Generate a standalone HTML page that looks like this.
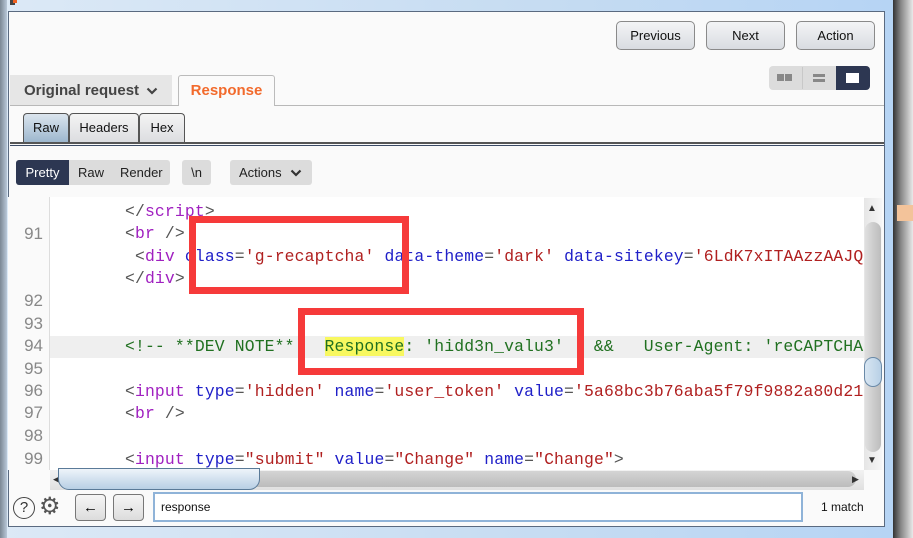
<!DOCTYPE html>
<html><head><meta charset="utf-8"><style>
*{margin:0;padding:0;box-sizing:border-box}
body{width:913px;height:538px;overflow:hidden;background:#6f7479;position:relative;font-family:"Liberation Sans",Arial,sans-serif}
.abs{position:absolute}
.btn{position:absolute;top:21px;height:29px;border:1px solid #8a8a8a;border-radius:5px;background:linear-gradient(#f3f4f6,#d9dce1);font-size:13px;color:#111;text-align:center;line-height:27px}
.code{position:absolute;left:50px;top:197px;width:814px;height:273px;background:#fff;overflow:hidden;font-family:"Liberation Mono",monospace;font-size:16.4px;letter-spacing:0.14px;white-space:pre}
.ln{position:absolute;left:0;width:43px;text-align:right;font-family:"Liberation Sans",sans-serif;font-size:17px;color:#888}
.l{position:absolute;left:75px;height:22px;line-height:22px}
.t{color:#555}.k{color:#a020c0}.a{color:#2020c8}.v{color:#b02020}.c{color:#207020}
</style></head><body>
<div class="abs" style="left:0;top:0;width:895px;height:538px;background:linear-gradient(90deg,#dce9f6,#c6dcf2 60%,#b6d4f4);"></div>
<div class="abs" style="left:893px;top:0;width:20px;height:538px;background:linear-gradient(90deg,#333,#888 40%,#e9e9e9)"></div>
<div class="abs" style="left:897px;top:205px;width:16px;height:16px;background:#f3c39a"></div>
<div class="abs" style="left:0;top:0;width:7px;height:538px;background:linear-gradient(90deg,#7b8794,#b9c8d8)"></div>
<div class="abs" style="left:10px;top:0;width:5px;height:5px;background:#444"></div>
<div class="abs" style="left:13px;top:0;width:4px;height:3px;background:#f06020"></div>
<div class="abs" style="left:8px;top:11px;width:877px;height:516px;background:#fafafa;border:1px solid #5a6a80;"></div>
<div class="btn" style="left:616px;width:79px">Previous</div>
<div class="btn" style="left:706px;width:79px">Next</div>
<div class="btn" style="left:796px;width:79px">Action</div>
<div class="abs" style="left:769px;top:66px;width:101px;height:24px;background:#dcdcdc;border-radius:4px"></div>
<div class="abs" style="left:802px;top:67px;width:1px;height:22px;background:#c8c8c8"></div>
<div class="abs" style="left:836px;top:66px;width:34px;height:24px;background:#2d3752;border-radius:0 4px 4px 0"></div>
<div class="abs" style="left:777px;top:74px;width:7px;height:7px;background:#888"></div>
<div class="abs" style="left:785px;top:74px;width:7px;height:7px;background:#888"></div>
<div class="abs" style="left:813px;top:74px;width:12px;height:3px;background:#888"></div>
<div class="abs" style="left:813px;top:79px;width:12px;height:3px;background:#888"></div>
<div class="abs" style="left:846px;top:73px;width:13px;height:10px;background:#fff"></div>
<div class="abs" style="left:10px;top:105px;width:874px;height:1px;background:#b8b8b8"></div>
<div class="abs" style="left:10px;top:75px;width:162px;height:30px;background:#e6e6e6;font-weight:bold;font-size:15px;color:#444;line-height:31px;padding-left:14px">Original request</div>
<svg class="abs" style="left:146px;top:87px" width="12" height="8"><path d="M1.5 1.5 L6 6 L10.5 1.5" stroke="#444" stroke-width="2.2" fill="none"/></svg>
<div class="abs" style="left:178px;top:75px;width:97px;height:31px;background:#fafafa;border:1px solid #bbb;border-bottom:none;border-radius:3px 3px 0 0;font-weight:bold;font-size:15px;color:#f26a2c;line-height:30px;text-align:center">Response</div>
<div class="abs" style="left:23px;top:113px;width:46px;height:29px;border:1px solid #555;border-bottom:none;border-radius:4px 4px 0 0;background:linear-gradient(#dbe5ee,#9db7ce);font-size:13px;line-height:28px;text-align:center;color:#111">Raw</div>
<div class="abs" style="left:69px;top:113px;width:70px;height:29px;border:1px solid #555;border-bottom:none;border-radius:4px 4px 0 0;background:linear-gradient(#f4f4f4,#dcdde0);font-size:13px;line-height:28px;text-align:center;color:#111">Headers</div>
<div class="abs" style="left:139px;top:113px;width:46px;height:29px;border:1px solid #555;border-bottom:none;border-radius:4px 4px 0 0;background:linear-gradient(#f4f4f4,#dcdde0);font-size:13px;line-height:28px;text-align:center;color:#111">Hex</div>
<div class="abs" style="left:10px;top:142px;width:874px;height:4px;border-top:2px solid #555;border-bottom:1px solid #3b4b66"></div>
<div class="abs" style="left:16px;top:160px;width:154px;height:25px;background:#dcdcdc;border-radius:3px"></div>
<div class="abs" style="left:16px;top:160px;width:53px;height:25px;background:#2d3752;border-radius:3px 0 0 3px;color:#fff;font-size:13px;line-height:25px;text-align:center">Pretty</div>
<div class="abs" style="left:78px;top:160px;font-size:13px;line-height:25px;color:#222">Raw</div>
<div class="abs" style="left:120px;top:160px;font-size:13px;line-height:25px;color:#222">Render</div>
<div class="abs" style="left:182px;top:160px;width:29px;height:25px;background:#dcdcdc;border-radius:3px;font-size:13px;line-height:25px;text-align:center;color:#222">\n</div>
<div class="abs" style="left:230px;top:160px;width:82px;height:25px;background:#dcdcdc;border-radius:3px;font-size:13px;line-height:25px;padding-left:9px;color:#222">Actions</div>
<svg class="abs" style="left:290px;top:169px" width="12" height="8"><path d="M1.5 1.5 L6 6 L10.5 1.5" stroke="#333" stroke-width="2.2" fill="none"/></svg>
<div class="abs" style="left:8px;top:197px;width:42px;height:273px;background:#fafafa"></div>
<div class="abs" style="left:49px;top:197px;width:1px;height:273px;background:#ddd"></div>
<div class="abs" style="left:0;top:0">
<div class="ln" style="top:224px">91</div>
<div class="ln" style="top:291px">92</div>
<div class="ln" style="top:314px">93</div>
<div class="ln" style="top:336px">94</div>
<div class="ln" style="top:359px">95</div>
<div class="ln" style="top:381px">96</div>
<div class="ln" style="top:403px">97</div>
<div class="ln" style="top:426px">98</div>
<div class="ln" style="top:449px">99</div>
</div>
<div class="code">
<div class="abs" style="left:0;top:139px;width:814px;height:22px;background:#efefef"></div>
<div class="l" style="top:4px"><span class="t">&lt;/</span><span class="k">script</span><span class="t">&gt;</span></div>
<div class="l" style="top:26px"><span class="t">&lt;</span><span class="k">br</span><span class="t"> /&gt;</span></div>
<div class="l" style="top:49px;left:85px"><span class="t">&lt;</span><span class="k">div</span> <span class="a">class</span><span class="t">=</span><span class="v">'g-recaptcha'</span> <span class="a">data-theme</span><span class="t">=</span><span class="v">'dark'</span> <span class="a">data-sitekey</span><span class="t">=</span><span class="v">'6LdK7xITAAzzAAJQ</span></div>
<div class="l" style="top:71px"><span class="t">&lt;/</span><span class="k">div</span><span class="t">&gt;</span></div>
<div class="l" style="top:139px"><span class="c">&lt;!-- **DEV NOTE**   <span style="background:#f8f860">Response</span>: 'hidd3n_valu3'   &amp;&amp;   User-Agent: 'reCAPTCHA</span></div>
<div class="l" style="top:184px"><span class="t">&lt;</span><span class="k">input</span> <span class="a">type</span><span class="t">=</span><span class="v">'hidden'</span> <span class="a">name</span><span class="t">=</span><span class="v">'user_token'</span> <span class="a">value</span><span class="t">=</span><span class="v">'5a68bc3b76aba5f79f9882a80d21</span></div>
<div class="l" style="top:206px"><span class="t">&lt;</span><span class="k">br</span><span class="t"> /&gt;</span></div>
<div class="l" style="top:252px"><span class="t">&lt;</span><span class="k">input</span> <span class="a">type</span><span class="t">=</span><span class="v">"submit"</span> <span class="a">value</span><span class="t">=</span><span class="v">"Change"</span> <span class="a">name</span><span class="t">=</span><span class="v">"Change"</span><span class="t">&gt;</span></div>
</div>
<div class="abs" style="left:189px;top:216px;width:220px;height:78px;border:7px solid #f63a3a"></div>
<div class="abs" style="left:298px;top:308px;width:286px;height:67px;border:7px solid #f63a3a"></div>
<div class="abs" style="left:864px;top:198px;width:18px;height:272px;background:linear-gradient(90deg,#e6e6e6,#f6f6f6)"></div>
<div class="abs" style="left:867px;top:203px;font-size:10px;color:#333">&#9650;</div>
<div class="abs" style="left:867px;top:455px;font-size:10px;color:#333">&#9660;</div>
<div class="abs" style="left:865px;top:222px;width:16px;height:230px;border-radius:8px;background:linear-gradient(90deg,#dfdfdf,#bcbcbc)"></div>
<div class="abs" style="left:864px;top:357px;width:18px;height:30px;border:1px solid #6a8aa8;border-radius:9px;background:linear-gradient(90deg,#d8e6f2,#b8d0e6)"></div>
<div class="abs" style="left:50px;top:470px;width:814px;height:20px;background:linear-gradient(#f2f2f2,#e0e0e0)"></div>
<div class="abs" style="left:66px;top:471px;width:790px;height:16px;border-radius:8px;background:linear-gradient(#d4d4d4,#bcbcbc)"></div>
<div class="abs" style="left:53px;top:474px;font-size:9px;color:#333">&#9664;</div>
<div class="abs" style="left:852px;top:474px;font-size:9px;color:#333">&#9654;</div>
<div class="abs" style="left:58px;top:468px;width:202px;height:22px;border:1px solid #5a7a98;border-radius:0 0 11px 11px;background:linear-gradient(#eef4fa,#b8cfe4)"></div>
<div class="abs" style="left:13px;top:497px;width:22px;height:22px;border:1.5px solid #444;border-radius:50%;font-size:15px;line-height:19px;text-align:center;color:#333">?</div>
<div class="abs" style="left:39px;top:494px;font-size:24px;line-height:26px;color:#555">&#9881;</div>
<div class="abs" style="left:75px;top:494px;width:31px;height:27px;border:1px solid #777;border-radius:4px;background:linear-gradient(#f6f6f6,#dcdcdc);text-align:center;line-height:25px;font-size:15px">&larr;</div>
<div class="abs" style="left:113px;top:494px;width:31px;height:27px;border:1px solid #777;border-radius:4px;background:linear-gradient(#f6f6f6,#dcdcdc);text-align:center;line-height:25px;font-size:15px">&rarr;</div>
<div class="abs" style="left:153px;top:492px;width:650px;height:30px;border:2px solid #8fb3d8;background:#fff;font-size:12px;line-height:26px;padding-left:6px;color:#111">response</div>
<div class="abs" style="left:821px;top:500px;font-size:12px;color:#111">1 match</div>
</body></html>
